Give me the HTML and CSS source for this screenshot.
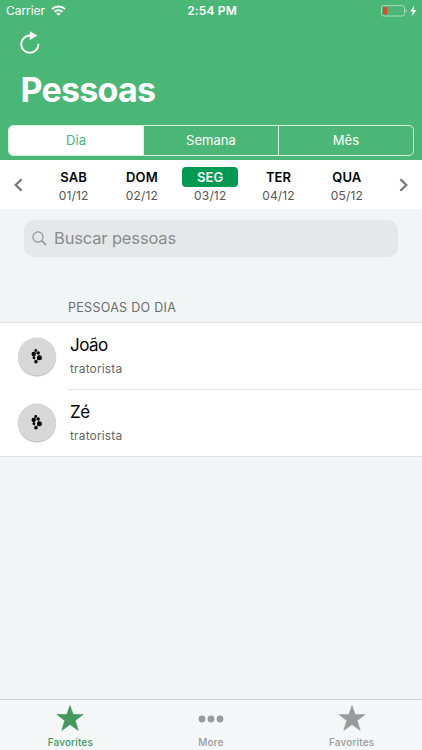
FILE: index.html
```html
<!DOCTYPE html>
<html lang="pt-BR">
<head>
<meta charset="utf-8">
<title>Pessoas</title>
<link rel="stylesheet" href="styles.css">
</head>
<body>
<div class="app">
  <header class="header">
    <div class="status">
      <div class="carrier"><span>Carrier</span>
        <svg width="15" height="11" viewBox="0 0 15 11" fill="none" stroke="#fff" stroke-width="2"><path d="M1 4.1C4.5.6 10.5.6 14 4.1M3.5 6.8c2.3-2.1 5.7-2.1 8 0"/><path d="M7.5 10.7 5.2 8.5c1.3-1.1 3.3-1.1 4.6 0z" fill="#fff" stroke="none"/></svg>
      </div>
      <time class="time">2:54 PM</time>
      <div class="battery">
        <svg width="36" height="12" viewBox="0 0 36 12"><rect x=".5" y=".6" width="23" height="10.4" rx="2.3" fill="none" stroke="#a7dbbc"/><rect x="2" y="2.1" width="4.4" height="7.4" rx=".8" fill="#e9432f"/><path d="M24.8 4v3.6q1.3-.4 1.3-1.8T24.8 4" fill="#a7dbbc"/><path d="M33.1.8 29.2 6.6h2.6l-1 4.6 4.7-6.3h-2.9z" fill="#fff"/></svg>
      </div>
    </div>
    <svg class="refresh" width="20" height="23" viewBox="0 0 20 23"><path d="M10.5 4.6A8.6 8.6 0 1 0 18.4 12.8" fill="none" stroke="#fff" stroke-width="1.9"/><path d="M9.8.2v8.9l7.7-4.5z" fill="#fff"/></svg>
    <h1 class="title"><span>Pessoas</span></h1>
    <nav class="segments">
      <span class="segment selected">Dia</span>
      <span class="segment">Semana</span>
      <span class="segment">Mês</span>
    </nav>
  </header>
  <section class="days">
    <svg class="chevron" width="9" height="14" viewBox="0 0 9 14"><path d="M7.6 1.2 1.7 7l5.9 5.8"/></svg>
    <div class="daylist">
      <div class="day"><b>SAB</b><span>01/12</span></div>
      <div class="day"><b>DOM</b><span>02/12</span></div>
      <div class="day current"><b>SEG</b><span>03/12</span></div>
      <div class="day"><b>TER</b><span>04/12</span></div>
      <div class="day"><b>QUA</b><span>05/12</span></div>
    </div>
    <svg class="chevron" width="9" height="14" viewBox="0 0 9 14"><path d="M1.4 1.2 7.3 7l-5.9 5.8"/></svg>
  </section>
  <div class="search">
    <svg width="15" height="15" viewBox="0 0 15 15" fill="none" stroke="#898d8e"><circle cx="6" cy="6" r="5.1" stroke-width="1.1"/><path d="m9.8 9.8 4.3 4.2" stroke-width="1.6"/></svg>
    <span>Buscar pessoas</span>
  </div>
  <h2 class="heading"><span>PESSOAS DO DIA</span></h2>
  <ul class="people">
    <li class="person">
      <div class="avatar"><svg width="12" height="16" viewBox="0 0 12 16"><path d="m4.2 2-1.5 3.3 4.1-1 1.4 4.7-3.4 4-2-4-.1-3.7" fill="none" stroke="#111" stroke-width=".6"/><circle cx="4.8" cy="2" r="1.4"/><circle cx="2.7" cy="5.5" r="2.2"/><circle cx="7.2" cy="4.4" r="1.7"/><circle cx="8.4" cy="9.2" r="2.5"/><circle cx="2.9" cy="9.2" r="1.4"/><circle cx="5" cy="13.2" r="1.8"/></svg></div>
      <div class="info"><strong>João</strong><span>tratorista</span></div>
    </li>
    <li class="person">
      <div class="avatar"><svg width="12" height="16" viewBox="0 0 12 16"><path d="m4.2 2-1.5 3.3 4.1-1 1.4 4.7-3.4 4-2-4-.1-3.7" fill="none" stroke="#111" stroke-width=".6"/><circle cx="4.8" cy="2" r="1.4"/><circle cx="2.7" cy="5.5" r="2.2"/><circle cx="7.2" cy="4.4" r="1.7"/><circle cx="8.4" cy="9.2" r="2.5"/><circle cx="2.9" cy="9.2" r="1.4"/><circle cx="5" cy="13.2" r="1.8"/></svg></div>
      <div class="info"><strong>Zé</strong><span>tratorista</span></div>
    </li>
  </ul>
  <footer class="tabs">
    <div class="tab active"><svg width="30" height="28" viewBox="0 0 30 28"><path stroke-linejoin="round" d="m15 1.5 3.2 9h9.9l-7.8 6.1 2.9 9.8-8.2-5.8-8.2 5.8 2.9-9.8-7.8-6.1h9.9z"/></svg><span>Favorites</span></div>
    <div class="tab"><svg width="30" height="28" viewBox="0 0 30 28"><circle cx="6" cy="15" r="3.4"/><circle cx="15" cy="15" r="3.4"/><circle cx="24" cy="15" r="3.4"/></svg><span>More</span></div>
    <div class="tab"><svg width="30" height="28" viewBox="0 0 30 28"><path stroke-linejoin="round" d="m15 1.5 3.2 9h9.9l-7.8 6.1 2.9 9.8-8.2-5.8-8.2 5.8 2.9-9.8-7.8-6.1h9.9z"/></svg><span>Favorites</span></div>
  </footer>
</div>
</body>
</html>
```
FILE: styles.css
```css
* { box-sizing: border-box; }
body { margin: 0; font-family: Inter, "Liberation Sans", sans-serif; }
svg { display: block; flex: none; }
.app { width: 422px; height: 750px; display: flex; flex-direction: column; background: #f1f5f5; overflow: hidden; }
.header { height: 160px; flex: none; background: #4bb777; color: #fff; }
.status { height: 21px; display: grid; grid-template-columns: 1fr auto 1fr; align-items: center; padding: 0 5px 0 6px; font-size: 12px; }
.carrier { display: flex; align-items: center; gap: 6px; letter-spacing: -.05px; }
.time { font-weight: 600; letter-spacing: .15px; margin-left: 1px; }
.battery { justify-self: end; }
.refresh { margin: 10px 0 0 20px; }
.title { margin: 15px 0 0 20.5px; height: 42px; line-height: 42px; font-size: 34px; font-weight: 700; letter-spacing: -.75px; }
.segments { display: grid; grid-template-columns: 134px 135px 1fr; margin: 14px 8px 0; height: 31px; border: 1px solid #d8f2e2; border-radius: 5px; overflow: hidden; }
.segment { display: flex; align-items: center; justify-content: center; padding-bottom: 1px; font-size: 13px; letter-spacing: .05px; }
.segment + .segment { border-left: 1px solid #d8f2e2; }
.selected { background: #fff; color: #4bb777; }
.days { height: 49px; flex: none; padding: 0 14px; background: #fff; display: flex; align-items: center; justify-content: space-between; }
.chevron { fill: none; stroke: #757575; stroke-width: 2.2; }
.daylist { display: grid; grid-template-columns: repeat(5, 68.3px); margin-left: -1.5px; padding-top: 3px; }
.day { display: flex; flex-direction: column; align-items: center; }
.day b { width: 56px; height: 20px; line-height: 20px; border-radius: 4px; text-align: center; font-size: 13px; font-weight: 600; letter-spacing: .1px; color: #050505; }
.day span { height: 18px; line-height: 18px; font-size: 12px; letter-spacing: .15px; color: #555; }
.current b { background: #009b50; color: #fff; }
.search { flex: none; margin: 11px 24px 0; height: 37px; padding: 0 8px 1px; border-radius: 10px; background: #e5e8e9; color: #898d8e; display: flex; align-items: center; gap: 7px; font-size: 16.5px; letter-spacing: -.15px; }
.heading { margin: 41px 0 0 68px; height: 24px; line-height: 20px; color: #6b6d6e; font-size: 12.5px; font-weight: 400; letter-spacing: .3px; }
.people { margin: 0; padding: 0 0 0 18px; list-style: none; background: #fff; border: solid #dfe2e2; border-width: 1px 0; }
.person { height: 67px; display: flex; align-items: center; gap: 12px; }
.person:last-child { height: 66px; }
.avatar { width: 38px; height: 38px; border-radius: 50%; background: #d8d8d8; box-shadow: 0 1px 1px #bbb; display: flex; align-items: center; justify-content: center; transform: translateY(-.5px); }
.info { flex: 1; height: 67px; display: flex; flex-direction: column; padding: 10px 0 0 2px; }
.person:first-child .info { border-bottom: 1px solid #e5e5e5; }
.person:last-child .info { height: 66px; }
.info strong { height: 24px; line-height: 24px; font-size: 17px; font-weight: 400; color: #000; letter-spacing: -.5px; }
.info span { margin-top: 2px; line-height: 20px; font-size: 12px; color: #666; letter-spacing: .15px; }
.tabs { margin-top: auto; height: 51px; flex: none; border-top: 1px solid #cbd0d0; background: #f4f8f8; display: grid; grid-template-columns: repeat(3, 1fr); }
.tab { display: flex; flex-direction: column; align-items: center; padding-top: 4px; color: #999; fill: #9b9b9b; font-size: 10px; font-weight: 500; letter-spacing: .15px; }
.tab span { line-height: 14px; margin-top: 3px; }
.tab path { stroke: #9b9b9b; stroke-width: .6; }
.tab.active { color: #42985d; fill: #42985d; }
.tab.active path { stroke: #42985d; }
```
